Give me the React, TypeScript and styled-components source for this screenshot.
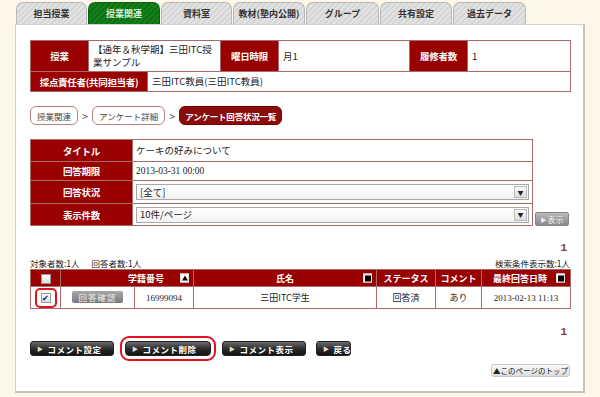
import React from "react";
import styled, { createGlobalStyle, css } from "styled-components";

const Global = createGlobalStyle`
  html, body { margin: 0; padding: 0; background: #fdf7ea; }
  body { font-family: "Noto Sans CJK JP", "Noto Sans", sans-serif; font-size: 9.5px; color: #222; }
  * { box-sizing: border-box; }
`;

const Page = styled.div`
  width: 600px;
  height: 397px;
  padding: 2px 15px 0 15px;
`;

const Tabs = styled.div`
  display: flex;
  gap: 1px;
  padding-left: 1px;
  height: 22px;
`;

const Tab = styled.div<{ $active?: boolean; $w: number }>`
  width: ${(p) => p.$w}px;
  height: 22px;
  border: 1px solid #b9b9b9;
  border-bottom: none;
  border-radius: 7px 7px 0 0;
  display: flex;
  align-items: center;
  justify-content: center;
  font-size: 9px;
  font-weight: bold;
  color: #333;
  white-space: nowrap;
  background: repeating-linear-gradient(135deg, #e2e2e2 0 2px, #d6d6d6 2px 4px);
  ${(p) =>
    p.$active &&
    css`
      background: repeating-linear-gradient(135deg, #15801b 0 2px, #0c6f12 2px 4px);
      border-color: #0c6010;
      color: #d8f0d8;
    `}
`;

const Panel = styled.div`
  width: 570px;
  height: 369px;
  background: #fff;
  border: 1px solid #d4d0c8;
  border-right: 2px solid #c8c4bc;
  border-bottom: 2px solid #c8c4bc;
  padding: 15px 0 0 14px;
`;

const InfoTable = styled.table`
  border-collapse: collapse;
  width: 540px;
  table-layout: fixed;
  td {
    border: 1px solid #a86a6a;
    padding: 0 4px;
    font-size: 9.5px;
  }
`;

const Label = styled.td`
  background: #990000;
  color: #fff;
  font-weight: bold;
  text-align: center;
  white-space: nowrap;
  letter-spacing: -0.3px;
`;

const Value = styled.td<{ $serif?: boolean }>`
  background: #fff;
  color: #222;
  line-height: 13px;
  ${(p) => p.$serif && css`font-family: "Liberation Serif", serif; font-size: 9px;`}
`;

const Crumbs = styled.div`
  display: flex;
  align-items: center;
  margin-top: 14px;
  height: 19px;
`;

const Crumb = styled.div<{ $active?: boolean }>`
  height: 19px;
  padding: 0 6px;
  border: 1px solid #b98080;
  border-radius: 6px;
  display: flex;
  align-items: center;
  font-size: 8.5px;
  color: #444;
  background: #fff;
  white-space: nowrap;
  ${(p) =>
    p.$active &&
    css`
      padding: 0 5px;
      background: #8a0c0c;
      border-color: #7a0000;
      color: #fff;
      font-weight: bold;
      letter-spacing: -0.2px;
    `}
`;

const Sep = styled.span`
  width: 14px;
  text-align: center;
  color: #555;
  font-size: 11px;
`;

const FilterRow = styled.div`
  display: flex;
  align-items: flex-end;
  margin-top: 14px;
  gap: 2px;
`;

const FilterTable = styled.table`
  border-collapse: collapse;
  width: 503px;
  table-layout: fixed;
  td {
    border: 1px solid #a86a6a;
    padding: 0 3px;
    font-size: 9.5px;
  }
`;

const Select = styled.div`
  height: 16px;
  border: 1px solid #a9a9a9;
  background: linear-gradient(#ffffff, #f2f2f2);
  display: flex;
  align-items: center;
  justify-content: space-between;
  padding-left: 3px;
  font-size: 9.5px;
`;

const Arrow = styled.span`
  width: 13px;
  height: 12px;
  margin-right: 1px;
  border: 1px solid #bbb;
  background: linear-gradient(#fafafa, #ddd);
  display: flex;
  align-items: center;
  justify-content: center;
  font-size: 6px;
  color: #222;
`;

const GreyBtn = styled.div`
  width: 34px;
  height: 14px;
  border: 1px solid #888;
  border-radius: 2px;
  background: linear-gradient(#b8b8b8, #888);
  color: #eee;
  font-size: 8px;
  display: flex;
  align-items: center;
  justify-content: center;
  gap: 1px;
  white-space: nowrap;
`;

const Pager = styled.div<{ $mt: number }>`
  width: 540px;
  text-align: right;
  margin-top: ${(p) => p.$mt}px;
  color: #8b3a3a;
  font-family: "Liberation Mono", monospace;
  font-weight: bold;
  font-size: 11px;
  line-height: 12px;
  padding-right: 3px;
`;

const Counts = styled.div`
  width: 540px;
  display: flex;
  justify-content: space-between;
  font-size: 8.5px;
  line-height: 12px;
  margin-top: 3px;
  color: #222;
`;

const Gap = styled.span`
  margin-left: 12px;
`;

const ResultTable = styled.table`
  border-collapse: collapse;
  width: 540px;
  table-layout: fixed;
  th, td {
    border: 1px solid #a86a6a;
    padding: 0;
    font-size: 9px;
    text-align: center;
    white-space: nowrap;
  }
  th {
    background: #990000;
    color: #fff;
    height: 17px;
    font-weight: bold;
  }
  td {
    height: 22px;
    background: #fff;
  }
`;

const HeadInner = styled.div`
  position: relative;
  display: flex;
  justify-content: center;
  align-items: center;
`;

const SortIcon = styled.span<{ $right: number; $up?: boolean }>`
  position: absolute;
  right: ${(p) => p.$right}px;
  top: 50%;
  transform: translateY(-50%);
  width: 9px;
  height: 9px;
  background: #fff;
  border: 1px solid #ddd;
  display: flex;
  align-items: center;
  justify-content: center;
  &::after {
    content: "";
    ${(p) =>
      p.$up
        ? css`
            border-left: 3.5px solid transparent;
            border-right: 3.5px solid transparent;
            border-bottom: 5px solid #000;
          `
        : css`
            width: 6px;
            height: 6px;
            background: #000;
          `}
  }
`;

const Check = styled.span`
  display: inline-flex;
  width: 10px;
  height: 10px;
  border: 1px solid #999;
  background: linear-gradient(#fff, #ddd);
  align-items: center;
  justify-content: center;
  vertical-align: middle;
  font-size: 8px;
  color: #1b3ca8;
  font-weight: bold;
`;

const HighlightRing = styled.span`
  display: inline-flex;
  padding: 3px 4px;
  border: 2px solid #e0141e;
  border-radius: 5px;
`;

const ConfirmBtn = styled.span`
  display: inline-flex;
  align-items: center;
  justify-content: center;
  width: 51px;
  height: 12px;
  border-radius: 2px;
  background: linear-gradient(#a8a8a8, #7a7a7a);
  color: #f0f0f0;
  font-size: 8.5px;
  letter-spacing: 1px;
`;

const Serif = styled.span`
  font-family: "Liberation Serif", serif;
  font-size: 9px;
`;

const Actions = styled.div`
  display: flex;
  align-items: center;
  margin-top: 3px;
  height: 15px;
  gap: 10px;
`;

const DarkBtn = styled.div<{ $w: number; $mark?: boolean }>`
  width: ${(p) => p.$w}px;
  height: 15px;
  border-radius: 3px;
  background: linear-gradient(#6a6a6a, #2a2a2a 55%, #111);
  border: 1px solid #222;
  color: #fff;
  font-size: 8.5px;
  font-weight: bold;
  display: flex;
  align-items: center;
  padding-left: 6px;
  gap: 4px;
  letter-spacing: 0.5px;
  white-space: nowrap;
  ${(p) =>
    p.$mark &&
    css`
      outline: 2px solid #e0141e;
      outline-offset: 3px;
      border-radius: 4px;
      margin: 0 1px;
    `}
`;

const Tri = styled.span`
  font-size: 6px;
  color: #ddd;
`;

const TopRow = styled.div`
  width: 540px;
  display: flex;
  justify-content: flex-end;
  margin-top: 8px;
`;

const TopLink = styled.div`
  height: 13px;
  width: 79px;
  border: 1px solid #c8c8c8;
  border-radius: 3px;
  background: linear-gradient(#fafafa, #dcdcdc);
  font-size: 7.5px;
  color: #222;
  display: flex;
  align-items: center;
  justify-content: center;
  white-space: nowrap;
`;

const tabs = [
  { t: "担当授業", w: 71 },
  { t: "授業関連", w: 72, a: true },
  { t: "資料室", w: 71 },
  { t: "教材(塾内公開)", w: 72 },
  { t: "グループ", w: 73 },
  { t: "共有設定", w: 72 },
  { t: "過去データ", w: 73 },
];

export default function App() {
  return (
    <>
      <Global />
      <Page>
        <Tabs>
          {tabs.map((t) => (
            <Tab key={t.t} $w={t.w} $active={t.a}>
              {t.t}
            </Tab>
          ))}
        </Tabs>
        <Panel>
          <InfoTable>
            <colgroup>
              <col style={{ width: 58 }} />
              <col style={{ width: 59 }} />
              <col style={{ width: 73 }} />
              <col style={{ width: 58 }} />
              <col style={{ width: 131 }} />
              <col style={{ width: 58 }} />
              <col style={{ width: 103 }} />
            </colgroup>
            <tbody>
              <tr style={{ height: 31 }}>
                <Label>授業</Label>
                <Value colSpan={2}>【通年＆秋学期】三田ITC授業サンプル</Value>
                <Label>曜日時限</Label>
                <Value>月1</Value>
                <Label>履修者数</Label>
                <Value>1</Value>
              </tr>
              <tr style={{ height: 20 }}>
                <Label colSpan={2}>採点責任者(共同担当者)</Label>
                <Value colSpan={5}>三田ITC教員(三田ITC教員)</Value>
              </tr>
            </tbody>
          </InfoTable>

          <Crumbs>
            <Crumb>授業関連</Crumb>
            <Sep>&gt;</Sep>
            <Crumb>アンケート詳細</Crumb>
            <Sep>&gt;</Sep>
            <Crumb $active>アンケート回答状況一覧</Crumb>
          </Crumbs>

          <FilterRow>
            <FilterTable>
              <colgroup>
                <col style={{ width: 102 }} />
                <col />
              </colgroup>
              <tbody>
                <tr style={{ height: 22 }}>
                  <Label>タイトル</Label>
                  <Value>ケーキの好みについて</Value>
                </tr>
                <tr style={{ height: 19 }}>
                  <Label>回答期限</Label>
                  <Value $serif>2013-03-31 00:00</Value>
                </tr>
                <tr style={{ height: 23 }}>
                  <Label>回答状況</Label>
                  <Value>
                    <Select>
                      [全て]
                      <Arrow>▼</Arrow>
                    </Select>
                  </Value>
                </tr>
                <tr style={{ height: 22 }}>
                  <Label>表示件数</Label>
                  <Value>
                    <Select>
                      10件/ページ
                      <Arrow>▼</Arrow>
                    </Select>
                  </Value>
                </tr>
              </tbody>
            </FilterTable>
            <GreyBtn>
              <span style={{ fontSize: 6 }}>▶</span>表示
            </GreyBtn>
          </FilterRow>

          <Pager $mt={16}>1</Pager>
          <Counts>
            <span>
              対象者数:1人<Gap>回答者数:1人</Gap>
            </span>
            <span>検索条件表示数:1人</span>
          </Counts>

          <ResultTable>
            <colgroup>
              <col style={{ width: 30 }} />
              <col style={{ width: 74 }} />
              <col style={{ width: 59 }} />
              <col style={{ width: 183 }} />
              <col style={{ width: 59 }} />
              <col style={{ width: 46 }} />
              <col style={{ width: 89 }} />
            </colgroup>
            <thead>
              <tr>
                <th>
                  <Check />
                </th>
                <th colSpan={2}>
                  <HeadInner>
                    <span style={{ marginLeft: 38 }}>学籍番号</span>
                    <SortIcon $right={4} $up />
                  </HeadInner>
                </th>
                <th>
                  <HeadInner>
                    氏名
                    <SortIcon $right={4} />
                  </HeadInner>
                </th>
                <th>ステータス</th>
                <th>コメント</th>
                <th>
                  <HeadInner>
                    <span style={{ marginRight: 12 }}>最終回答日時</span>
                    <SortIcon $right={5} />
                  </HeadInner>
                </th>
              </tr>
            </thead>
            <tbody>
              <tr>
                <td>
                  <HighlightRing>
                    <Check>✔</Check>
                  </HighlightRing>
                </td>
                <td>
                  <ConfirmBtn>回答確認</ConfirmBtn>
                </td>
                <td>
                  <Serif>16999094</Serif>
                </td>
                <td>三田ITC学生</td>
                <td>回答済</td>
                <td>あり</td>
                <td>
                  <Serif>2013-02-13 11:13</Serif>
                </td>
              </tr>
            </tbody>
          </ResultTable>

          <Pager $mt={17}>1</Pager>

          <Actions>
            <DarkBtn $w={84}>
              <Tri>▶</Tri>コメント設定
            </DarkBtn>
            <DarkBtn $w={86} $mark>
              <Tri>▶</Tri>コメント削除
            </DarkBtn>
            <DarkBtn $w={84}>
              <Tri>▶</Tri>コメント表示
            </DarkBtn>
            <DarkBtn $w={35}>
              <Tri>▶</Tri>戻る
            </DarkBtn>
          </Actions>

          <TopRow>
            <TopLink>▲このページのトップ</TopLink>
          </TopRow>
        </Panel>
      </Page>
    </>
  );
}
